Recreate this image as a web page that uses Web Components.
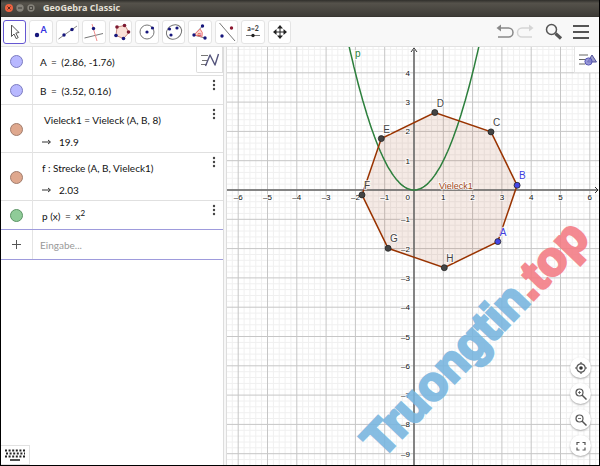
<!DOCTYPE html>
<html lang="de">
<head>
<meta charset="utf-8">
<title>GeoGebra Classic</title>
<style>
html, body { height: 100%; margin: 0; }
body { font-family: Lato, "Noto Sans", sans-serif; color: #111; background: #000; overflow: hidden; }
</style>
</head>
<body>
<geo-window></geo-window>
<script>
const define = (name, html, setup) => {
  const template = document.createElement('template');
  template.innerHTML = html;
  customElements.define(name, class extends HTMLElement {
    constructor() {
      super();
      this.attachShadow({ mode: 'open' }).append(template.content.cloneNode(true));
    }
    connectedCallback() { if (setup) setup(this.shadowRoot, this); }
  });
};

define('title-bar', `
<style>
:host { display: flex; align-items: center; gap: 3px; height: 17px; padding: 0 4px;
  background: linear-gradient(#302f2b, #55524b 20%, #3e3c37); border-bottom: 1px solid #383631; box-sizing: border-box;
  font: bold 9px/14px "Open Sans", "Noto Sans", sans-serif; color: #e5e1d8; }
button { display: grid; padding: 0; border: 0; background: none; }
svg { width: 8px; height: 8px; display: block; }
h1 { font: inherit; margin: 0 0 0 5px; }
</style>
<button aria-label="Schließen"><svg viewBox="0 0 8 8"><circle cx="4" cy="4" r="4" fill="#ed6240"/><path d="M2.5 2.5l3 3m0-3l-3 3" stroke="#5b2b1d"/></svg></button>
<button aria-label="Minimieren"><svg viewBox="0 0 8 8"><circle cx="4" cy="4" r="3.7" fill="#85827a"/><path d="M2 4h4" stroke="#3d3b36"/></svg></button>
<button aria-label="Maximieren"><svg viewBox="0 0 8 8"><circle cx="4" cy="4" r="3.7" fill="#85827a"/><path d="M2.5 2.5h3v3h-3z" fill="none" stroke="#3d3b36" stroke-width=".8"/></svg></button>
<h1><slot></slot></h1>`);

define('tool-button', `
<style>
:host { display: block; min-width: 0; }
button { display: grid; place-items: center; width: 100%; height: 24px; padding: 0; box-sizing: border-box;
  background: #fff; border: 1px solid #e4e4e4; border-radius: 3px; }
:host([active]) button { border-color: #6557d2; }
::slotted(svg) { display: block; width: 22px; height: 22px; }
</style>
<button><slot></slot></button>`, (root, host) => {
  root.querySelector('button').setAttribute('aria-label', host.getAttribute('label'));
});

define('tool-bar', `
<style>
:host { display: flex; align-items: center; justify-content: space-between; height: 30px; padding: 0 8px 0 2px;
  box-sizing: border-box; background: #f8f8f8; border-bottom: 1px solid #e2e2e2; }
.tools { display: grid; grid-template-columns: repeat(11, 1fr); gap: 3px; flex: 0 1 288px; }
.actions { display: flex; align-items: center; }
.actions button { padding: 0; border: 0; background: none; }
.actions button svg { display: block; width: 20px; height: 20px; }
.actions .wide { margin-left: 8px; }
svg { fill: none; stroke: #555; }
svg text { stroke: none; font-family: Lato, sans-serif; }
</style>
<div class="tools">
<tool-button active label="Bewege"><svg viewBox="0 0 22 22"><path d="M7.500 4l7.500 7.500-3.200.6 2.400 4.500-2 1-2.200-4.600-2.500 2.500z" fill="#fff"/></svg></tool-button>
<tool-button label="Punkt"><svg viewBox="0 0 22 22"><circle cx="7" cy="14" r="2.200" fill="#16167c" stroke="none"/><text x="10.500" y="12" font-size="9" font-weight="bold" fill="#3333e0">A</text></svg></tool-button>
<tool-button label="Gerade"><svg viewBox="0 0 22 22"><path d="M1.500 18L20 5" stroke="#888"/><g fill="#16167c" stroke="none"><circle cx="7" cy="14" r="1.700"/><circle cx="15" cy="8.500" r="1.700"/></g></svg></tool-button>
<tool-button label="Senkrechte"><svg viewBox="0 0 22 22"><path d="M1.500 17L20 12.500" stroke="#777"/><path d="M9 3l5 17" stroke="#ef8e8e"/><circle cx="10.500" cy="7.500" r="1.700" fill="#16167c" stroke="none"/></svg></tool-button>
<tool-button label="Vieleck"><svg viewBox="0 0 22 22"><path d="M7 6l8-1.500 4 7-5.500 6L6 14.500z" fill="#fae0d8" stroke="#c98d80"/><g fill="#7c1830" stroke="none"><circle cx="7" cy="6" r="1.800"/><circle cx="14.500" cy="4.500" r="1.800"/><circle cx="18.500" cy="11" r="1.800"/></g><g fill="#16167c" stroke="none"><circle cx="6" cy="14.500" r="1.800"/><circle cx="13.500" cy="17.500" r="1.800"/></g></svg></tool-button>
<tool-button label="Kreis"><svg viewBox="0 0 22 22"><circle cx="11" cy="11" r="7" stroke="#777"/><g fill="#16167c" stroke="none"><circle cx="11" cy="11" r="1.600"/><circle cx="16.500" cy="7" r="1.600"/></g></svg></tool-button>
<tool-button label="Ellipse"><svg viewBox="0 0 22 22"><ellipse cx="11" cy="11" rx="8" ry="6.800" transform="rotate(-35 11 11)" stroke="#777"/><g fill="#16167c" stroke="none"><circle cx="6.500" cy="8" r="1.600"/><circle cx="14" cy="7" r="1.600"/><circle cx="8" cy="14" r="1.600"/></g></svg></tool-button>
<tool-button label="Winkel"><svg viewBox="0 0 22 22"><path d="M13.500 5L5 14l11 3" stroke="#777"/><path d="M11 8a7 7 0 0 1 2 7.500L5 14z" fill="#fbd6cf" stroke="#e77"/><text x="8.500" y="14.500" font-size="6" fill="#c33">α</text><g fill="#16167c" stroke="none"><circle cx="13.500" cy="5" r="1.700"/><circle cx="5" cy="14" r="1.700"/><circle cx="16" cy="17" r="1.700"/></g></svg></tool-button>
<tool-button label="Spiegeln"><svg viewBox="0 0 22 22"><path d="M3.500 2L19 20" stroke="#777"/><circle cx="6" cy="15" r="1.700" fill="#16167c" stroke="none"/><circle cx="15.500" cy="7" r="1.700" fill="#8c1830" stroke="none"/></svg></tool-button>
<tool-button label="Schieberegler"><svg viewBox="0 0 22 22"><text x="11" y="10" font-size="7" font-weight="bold" text-anchor="middle" fill="#333">a=2</text><path d="M4 14.500h14" stroke="#777"/><circle cx="11" cy="14.500" r="1.700" fill="#222" stroke="none"/></svg></tool-button>
<tool-button label="Verschieben"><svg viewBox="0 0 22 22"><path d="M11 7v8M7 11h8" stroke="#222"/><path d="M11 4l3 3.500H8zM11 18l3-3.500H8zM4 11l3.500-3v6zM18 11l-3.500-3v6z" fill="#222" stroke="none"/></svg></tool-button>
</div>
<div class="actions">
<button aria-label="Rückgängig"><svg viewBox="0 0 20 20" stroke-width="1.500"><path d="M5 6h8.500a4.200 4.200 0 0 1 0 9H3" stroke="#888"/><path d="M1.500 6l4.500-3.500v7z" fill="#888" stroke="none"/></svg></button>
<button aria-label="Wiederherstellen"><svg viewBox="0 0 20 20" stroke-width="1.500"><path d="M14 6H7a4.200 4.200 0 0 0 0 9h10" stroke="#d5d5d5"/><path d="M18.500 6L14 2.500v7z" fill="#d5d5d5" stroke="none"/></svg></button>
<button class="wide" aria-label="Suche"><svg viewBox="0 0 20 20"><circle cx="8.500" cy="7.500" r="5" stroke-width="1.500"/><path d="M12.500 11.500l5.500 5" stroke-width="3.200"/></svg></button>
<button class="wide" aria-label="Menü"><svg viewBox="0 0 20 20" stroke-width="2"><path d="M2 4h16M2 10h16M2 16h16"/></svg></button>
</div>`);

define('algebra-row', `
<style>
:host { display: grid; grid-template-columns: 32px 1fr 18px; box-sizing: border-box; height: 29px;
  border-bottom: 1px solid #e0e0e0; font-size: 10px; line-height: 22px; --marble: #b8b8ff; --rim: #7c7cc0; }
:host([two]) { height: 48px; }
:host([tone=brown]) { --marble: #dfa88e; --rim: #a17d6d; }
:host([tone=green]) { --marble: #8fcb98; --rim: #5c9465; }
.side { display: grid; place-items: center; border-right: 1px solid #e4e4e4; }
.marble { width: 13px; height: 13px; padding: 0; box-sizing: border-box; border: 1px solid var(--rim);
  border-radius: 50%; background: var(--marble); }
.text { padding: 4px 0 0 7px; white-space: nowrap; }
.more { align-self: start; justify-self: center; padding: 3px; border: 0; background: none; }
.more svg { display: block; width: 4px; height: 12px; fill: #444; }
:host([plain]) .more { visibility: hidden; }
</style>
<div class="side"><button class="marble" aria-label="Anzeigen"></button></div>
<div class="text"><slot></slot></div>
<button class="more" aria-label="Mehr"><svg viewBox="0 0 4 12"><circle cx="2" cy="2" r="1.200"/><circle cx="2" cy="6" r="1.200"/><circle cx="2" cy="10" r="1.200"/></svg></button>`);

define('algebra-view', `
<style>
:host { display: flex; flex-direction: column; position: relative; background: #fff; min-width: 0; }
.indent { padding-left: 4px; }
.result { padding-left: 2px; display: flex; gap: 7px; }
.result svg { width: 10px; height: 22px; fill: none; stroke: #333; }
.eq { padding: 0 2px; }
sup { font-size: 8px; line-height: 0; }
.input { display: grid; grid-template-columns: 32px 1fr; height: 31px; box-sizing: border-box; border: solid #9e9bdc; border-width: 1px 0; margin-top: -1px; }
.add { padding: 0; border: 0; border-right: 1px solid #e4e4e4; background: none; display: grid; place-items: center; }
.add svg { width: 9px; height: 9px; stroke: #555; }
input { min-width: 0; border: 0; padding: 0 0 0 7px; outline: 0; background: none; font: 10px/22px Lato, sans-serif; }
input::placeholder { color: #999; }
.style { position: absolute; right: 0; top: 0; width: 27px; height: 26px; padding: 0; display: grid; place-items: center;
  background: #fff; border: 1px solid #ddd; border-top: 0; border-radius: 0 0 0 2px; box-sizing: border-box; }
.style svg { width: 20px; height: 16px; fill: none; stroke: #777; }
.keys { margin-top: auto; align-self: start; width: 29px; height: 20px; padding: 0; border: 1px solid #e2e2e2;
  border-left: 0; background: #fff; display: grid; place-items: center; box-sizing: border-box; }
.keys svg { width: 20px; height: 12px; fill: none; stroke: #222; }
</style>
<algebra-row plain>A <span class="eq">=</span> (2.86, -1.76)</algebra-row>
<algebra-row>B <span class="eq">=</span> (3.52, 0.16)</algebra-row>
<algebra-row two tone="brown"><div class="indent">Vieleck1 = Vieleck (A, B, 8)</div><div class="result"><svg viewBox="0 0 10 22"><path d="M0 11h8M6 9l2.500 2L6 13"/></svg>19.9</div></algebra-row>
<algebra-row two tone="brown"><div class="result">f : Strecke (A, B, Vieleck1)</div><div class="result"><svg viewBox="0 0 10 22"><path d="M0 11h8M6 9l2.500 2L6 13"/></svg>2.03</div></algebra-row>
<algebra-row tone="green"><div class="result"><span>p (x) <span class="eq">=</span> x<sup>2</sup></span></div></algebra-row>
<div class="input"><button class="add" aria-label="Hinzufügen"><svg viewBox="0 0 9 9"><path d="M4.500 0v9M0 4.500h9"/></svg></button><input aria-label="Eingabe" placeholder="Eingabe..."></div>
<button class="keys" aria-label="Tastatur"><svg viewBox="0 0 20 12"><path d="M0 1.500h20M1 4.500h19M0 7.500h20" stroke-width="2" stroke-dasharray="2 1.600"/><path d="M5 11h10" stroke-width="1.600"/></svg></button>
<button class="style" aria-label="Darstellung"><svg viewBox="0 0 20 16"><path d="M1 3.500h7M2 8.500h5M1 12.500h6"/><path d="M5.500 14L10 3l5 10 3.500-11" stroke="#55557c" stroke-width="1.400" stroke-linejoin="round"/></svg></button>`);

define('graph-view', `
<style>
:host { display: block; position: relative; background: #fff; min-width: 0; min-height: 0; overflow: hidden; }
.plot { position: absolute; inset: 0; width: 100%; height: 100%; font-family: "Liberation Sans", Arial, sans-serif; }
.halo { paint-order: stroke; stroke: #fff; stroke-width: 2px; stroke-opacity: .7; }
.mark { font: bold 47px "Liberation Sans", Arial, sans-serif; stroke-width: 3px; }
.style { position: absolute; right: 0; top: 0; width: 25px; height: 26px; padding: 0; background: #fff; border: 1px solid #e4e4e4;
  border-width: 0 0 1px 1px; display: grid; place-items: center; box-sizing: border-box; }
.style svg { width: 19px; height: 16px; fill: none; stroke: #666; }
nav { position: absolute; right: 8px; bottom: 9px; display: grid; gap: 5px; }
nav button { width: 21px; height: 21px; padding: 0; border: 0; border-radius: 50%; background: #fff; box-shadow: 0 1px 2px #aaa;
  display: grid; place-items: center; }
nav svg { width: 12px; height: 12px; fill: none; stroke: #555; stroke-width: 1.200; }
</style>
<svg class="plot" viewBox="227 47 372 418" preserveAspectRatio="xMidYMid slice"></svg>
<button class="style" aria-label="Darstellung"><svg viewBox="0 0 19 16"><path d="M1 3h9M1 7.500h6M1 12h6"/><path d="M14 3l4.500 7h-9z" fill="#9c9ccb" stroke="#55559c"/><circle cx="10.500" cy="9.500" r="3.600" fill="#8080ce" fill-opacity=".8" stroke="#5555b4"/></svg></button>
<nav>
<button aria-label="Standardansicht"><svg viewBox="0 0 12 12"><circle cx="6" cy="6" r="4.200"/><circle cx="6" cy="6" r="1.800" fill="#333" stroke="none"/><path d="M6 0v2M6 10v2M0 6h2M10 6h2"/></svg></button>
<button aria-label="Vergrößern"><svg viewBox="0 0 12 12"><circle cx="4.500" cy="4.500" r="3.500"/><path d="M7 7l4.500 4.500" stroke-width="1.500"/><path d="M3 4.500h3M4.500 3v3" stroke-width=".8"/></svg></button>
<button aria-label="Verkleinern"><svg viewBox="0 0 12 12"><circle cx="4.500" cy="4.500" r="3.500"/><path d="M7 7l4.500 4.500" stroke-width="1.500"/><path d="M3 4.500h3" stroke-width=".8"/></svg></button>
<button aria-label="Vollbild"><svg viewBox="0 0 12 12" stroke-width="1.500"><path d="M2 5V2.500h2.500M7.500 2.500H10V5M10 7.500V10H7.500M4.500 10H2V7.500"/></svg></button>
</nav>`, root => {
  const unit = 29.3, ox = 414, oy = 190;
  const X = x => (ox + x * unit).toFixed(1), Y = y => (oy - y * unit).toFixed(1);
  let minor = '', major = '', labels = '';
  for (let i = -60; i <= 60; i++) {
    const d = `M${X(i / 5)} -100V600M100 ${Y(i / 5)}H800`;
    if (i % 5) minor += d; else major += d;
  }
  for (let n = -9; n <= 6; n++) {
    if (!n) continue;
    const s = String(n).replace('-', '–');
    if (n >= -6) labels += `<text class="halo" x="${X(n)}" y="200" text-anchor="middle">${s}</text>`;
    if (n <= 4) labels += `<text class="halo" x="410" y="${+Y(n) + 3}" text-anchor="end">${s}</text>`;
  }
  labels += '<text class="halo" x="410" y="200" text-anchor="end">0</text>';
  const pts = [[2.86, -1.76], [3.52, 0.16]], c = Math.SQRT1_2;
  let dx = 0.66, dy = 1.92;
  while (pts.length < 8) {
    [dx, dy] = [(dx - dy) * c, (dx + dy) * c];
    const last = pts[pts.length - 1];
    pts.push([last[0] + dx, last[1] + dy]);
  }
  const poly = pts.map(p => X(p[0]) + ',' + Y(p[1])).join(' ');
  let curve = '';
  for (let x = -2.4; x <= 2.41; x += 0.05) curve += `${X(x)},${Y(x * x)} `;
  const dots = pts.map((p, i) => `<circle cx="${X(p[0])}" cy="${Y(p[1])}" r="3" fill="${i < 2 ? '#4646e6' : '#444'}" stroke="#222" stroke-width=".8"/>
    <text class="halo" x="${+X(p[0]) + 2}" y="${+Y(p[1]) - 6}" fill="${i < 2 ? '#4040e0' : '#444'}">${'ABCDEFGH'[i]}</text>`).join('');
  root.querySelector('.plot').innerHTML = `
    <path d="${minor}" stroke="#f0f0f0"/>
    <path d="${major}" stroke="#c6c6c6"/>
    <polygon points="${poly}" fill="#993300" fill-opacity=".1"/>
    <path d="M${ox} 50V600M100 ${oy}H597" stroke="#666" stroke-width="1.500"/>
    <path d="M411 52l3-4 3 4M595 187l3 3-3 3" fill="none" stroke="#333"/>
    <g font-size="8" fill="#111">${labels}</g>
    <polyline points="${curve}" fill="none" stroke="#2c7f3c" stroke-width="1.500"/>
    <polygon points="${poly}" fill="none" stroke="#993300" stroke-width="1.500"/>
    <g font-size="10">${dots}
      <text class="halo" x="439" y="189" font-size="9" fill="#a34a20">Vieleck1</text>
      <text class="halo" x="355" y="57" fill="#2c7f3c">p</text></g>
    <text class="mark" transform="translate(382 459) rotate(-46.4)" opacity=".88"><tspan fill="#77b5df" stroke="#77b5df">Truongtin</tspan><tspan fill="#f37b83" stroke="#f37b83">.top</tspan></text>`;
});

define('geo-window', `
<style>
:host { display: grid; grid-template-rows: auto auto 1fr; height: 100%; box-sizing: border-box; border: solid #000; border-width: 0 1px 1px; background: #fff; }
main { display: grid; grid-template-columns: 37fr 4px 62fr; min-height: 0; }
.split { background: #f7f7f7; border: solid #ddd; border-width: 0 1px; }
</style>
<title-bar>GeoGebra Classic</title-bar>
<tool-bar></tool-bar>
<main><algebra-view></algebra-view><div class="split"></div><graph-view></graph-view></main>`);
</script>
</body>
</html>
